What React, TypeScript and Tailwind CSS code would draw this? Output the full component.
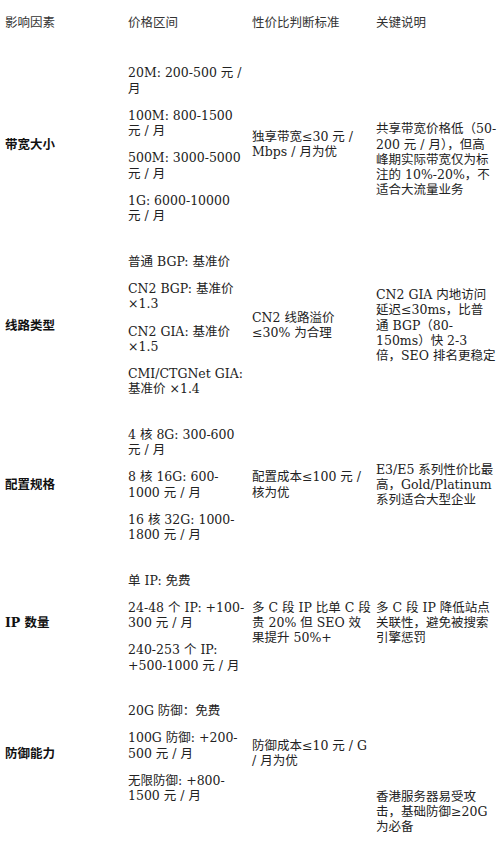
import { Fragment } from 'react';

interface FactorRow {
  factor: string;
  prices: string[];
  criterion: string;
  note: string;
  noteClass?: string;
}

// line breaks follow the reference layout (cells use whitespace-pre-line)
const rows: FactorRow[] = [
  {
    factor: '带宽大小',
    prices: ['20M: 200-500 元 /\n月', '100M: 800-1500\n元 / 月', '500M: 3000-5000\n元 / 月', '1G: 6000-10000\n元 / 月'],
    criterion: '独享带宽≤30 元 /\nMbps / 月为优',
    note: '共享带宽价格低（50-\n200 元 / 月），但高\n峰期实际带宽仅为标\n注的 10%-20%，不\n适合大流量业务',
    noteClass: 'pt-[45px]',
  },
  {
    factor: '线路类型',
    prices: ['普通 BGP: 基准价', 'CN2 BGP: 基准价\n×1.3', 'CN2 GIA: 基准价\n×1.5', 'CMI/CTGNet GIA:\n基准价 ×1.4'],
    criterion: 'CN2 线路溢价\n≤30% 为合理',
    note: 'CN2 GIA 内地访问\n延迟≤30ms，比普\n通 BGP（80-\n150ms）快 2-3\n倍，SEO 排名更稳定',
  },
  {
    factor: '配置规格',
    prices: ['4 核 8G: 300-600\n元 / 月', '8 核 16G: 600-\n1000 元 / 月', '16 核 32G: 1000-\n1800 元 / 月'],
    criterion: '配置成本≤100 元 /\n核为优',
    note: 'E3/E5 系列性价比最\n高，Gold/Platinum\n系列适合大型企业',
  },
  {
    factor: 'IP 数量',
    prices: ['单 IP: 免费', '24-48 个 IP: +100-\n300 元 / 月', '240-253 个 IP:\n+500-1000 元 / 月'],
    criterion: '多 C 段 IP 比单 C 段\n贵 20% 但 SEO 效\n果提升 50%+',
    note: '多 C 段 IP 降低站点\n关联性，避免被搜索\n引擎惩罚',
  },
  {
    factor: '防御能力',
    prices: ['20G 防御：免费', '100G 防御: +200-\n500 元 / 月', '无限防御: +800-\n1500 元 / 月'],
    criterion: '防御成本≤10 元 / G\n/ 月为优',
    note: '香港服务器易受攻\n击，基础防御≥20G\n为必备',
    noteClass: 'self-end -mb-[31px]',
  },
];

const headers = ['影响因素', '价格区间', '性价比判断标准', '关键说明'];

export default function App() {
  return (
    <div className="min-h-[848px] w-[500px] bg-white pl-[5px] font-['DejaVu_Serif','Noto_Sans_CJK_SC',serif] text-[12.5px] leading-[15.3px] text-[#222] whitespace-pre-line [text-autospace:no-autospace]">
      <div className="grid grid-cols-[123px_124px_124px_124px] items-center">
        {headers.map((h) => (
          <div key={h} className="pt-[15px] pb-[20px] text-[#333]">
            {h}
          </div>
        ))}

        {rows.map((row) => (
          <Fragment key={row.factor}>
            <div className="py-[15px] pr-[6px] font-bold text-[#111]">{row.factor}</div>
            <div className="flex flex-col gap-[12px] py-[15px] pr-[3px]">
              {row.prices.map((p) => (
                <p key={p}>{p}</p>
              ))}
            </div>
            <div className="py-[15px]">{row.criterion}</div>
            <div className={`py-[15px] ${row.noteClass ?? ''}`}>{row.note}</div>
          </Fragment>
        ))}
      </div>
    </div>
  );
}
